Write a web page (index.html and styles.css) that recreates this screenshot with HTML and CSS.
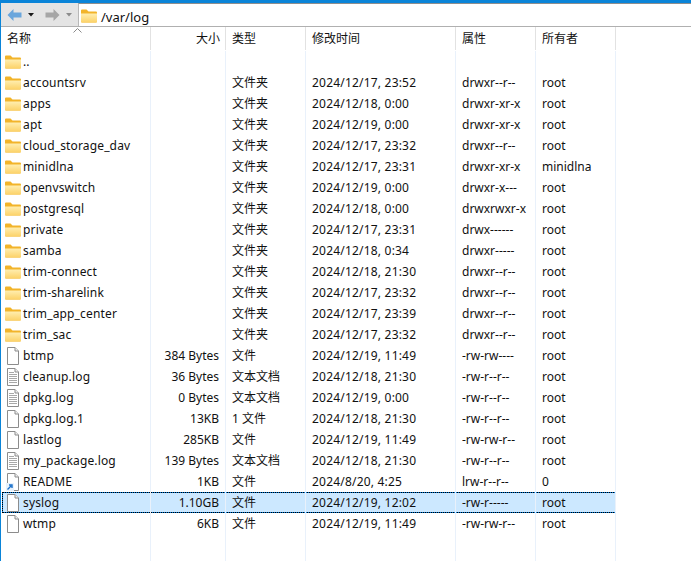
FILE: index.html
```html
<!DOCTYPE html>
<html lang="zh">
<head>
<meta charset="utf-8">
<title>/var/log</title>
<link rel="stylesheet" href="styles.css">
</head>
<body>
<svg class="defs" width="0" height="0">
  <defs>
    <linearGradient id="fg" x1="0" y1="0" x2="0" y2="1"><stop offset="0" stop-color="#ffeeb0"/><stop offset="1" stop-color="#fcd268"/></linearGradient>
    <symbol id="folder" viewBox="0 0 16 16">
      <path d="M0 2.500a1 1 0 0 1 1-1h4.500l2 2H15a1 1 0 0 1 1 1v9a1 1 0 0 1-1 1H1a1 1 0 0 1-1-1z" fill="#f2b42a"/>
      <path d="M0 5.500h16v8a1 1 0 0 1-1 1H1a1 1 0 0 1-1-1z" fill="url(#fg)"/>
    </symbol>
    <symbol id="file" viewBox="0 0 16 18">
      <path d="M2.500 0.500h7.500l3.500 3.500v13.500h-11z" fill="#fff" stroke="#8c8c8c"/>
      <path d="M10 0.500v3.500h3.500" fill="#f0f0f0" stroke="#8c8c8c"/>
    </symbol>
    <symbol id="text" viewBox="0 0 16 18">
      <path d="M2.500 0.500h7.500l3.500 3.500v13.500h-11z" fill="#fff" stroke="#8c8c8c"/>
      <path d="M10 0.500v3.500h3.500" fill="#f0f0f0" stroke="#8c8c8c"/>
      <path d="M4 4.500h5M4 6.500h8M4 8.500h8M4 10.500h8M4 12.500h8M4 14.500h8" stroke="#a8a8a8"/>
    </symbol>
  </defs>
</svg>
<div class="window">
  <div class="toolbar">
    <div class="nav">
      <svg class="arrow" viewBox="0 0 15 12"><path d="M6.500 0L0.500 6l6 6V8.500h8v-5h-8z" fill="#6aa6dc"/></svg>
      <svg class="caret" viewBox="0 0 6 4"><path d="M0 0h6L3 3.500z" fill="#1a1a1a"/></svg>
      <svg class="arrow fwd" viewBox="0 0 15 12"><path d="M8.500 0l6 6-6 6V8.500h-8v-5h8z" fill="#a6a6a6"/></svg>
      <svg class="caret" viewBox="0 0 6 4"><path d="M0 0h6L3 3.500z" fill="#8c8c8c"/></svg>
    </div>
    <div class="path">
      <svg class="path-icon"><use href="#folder"/></svg>
      <span>/var/log</span>
    </div>
  </div>
  <div class="list">
    <svg class="sort" viewBox="0 0 9 5"><path d="M0.500 4.500l4-4 4 4" fill="none" stroke="#8a8a8a"/></svg>
    <div class="row head">
      <div class="cell">名称</div><div class="cell size">大小</div><div class="cell">类型</div><div class="cell">修改时间</div><div class="cell">属性</div><div class="cell">所有者</div>
    </div>
    <div class="rows">
      <div class="row"><div class="cell name"><svg class="ic"><use href="#folder"/></svg>..</div><div class="cell size"></div><div class="cell"></div><div class="cell"></div><div class="cell"></div><div class="cell"></div></div>
      <div class="row"><div class="cell name"><svg class="ic"><use href="#folder"/></svg>accountsrv</div><div class="cell size"></div><div class="cell">文件夹</div><div class="cell">2024/12/17, 23:52</div><div class="cell">drwxr--r--</div><div class="cell">root</div></div>
      <div class="row"><div class="cell name"><svg class="ic"><use href="#folder"/></svg>apps</div><div class="cell size"></div><div class="cell">文件夹</div><div class="cell">2024/12/18, 0:00</div><div class="cell">drwxr-xr-x</div><div class="cell">root</div></div>
      <div class="row"><div class="cell name"><svg class="ic"><use href="#folder"/></svg>apt</div><div class="cell size"></div><div class="cell">文件夹</div><div class="cell">2024/12/19, 0:00</div><div class="cell">drwxr-xr-x</div><div class="cell">root</div></div>
      <div class="row"><div class="cell name"><svg class="ic"><use href="#folder"/></svg>cloud_storage_dav</div><div class="cell size"></div><div class="cell">文件夹</div><div class="cell">2024/12/17, 23:32</div><div class="cell">drwxr--r--</div><div class="cell">root</div></div>
      <div class="row"><div class="cell name"><svg class="ic"><use href="#folder"/></svg>minidlna</div><div class="cell size"></div><div class="cell">文件夹</div><div class="cell">2024/12/17, 23:31</div><div class="cell">drwxr-xr-x</div><div class="cell">minidlna</div></div>
      <div class="row"><div class="cell name"><svg class="ic"><use href="#folder"/></svg>openvswitch</div><div class="cell size"></div><div class="cell">文件夹</div><div class="cell">2024/12/19, 0:00</div><div class="cell">drwxr-x---</div><div class="cell">root</div></div>
      <div class="row"><div class="cell name"><svg class="ic"><use href="#folder"/></svg>postgresql</div><div class="cell size"></div><div class="cell">文件夹</div><div class="cell">2024/12/18, 0:00</div><div class="cell">drwxrwxr-x</div><div class="cell">root</div></div>
      <div class="row"><div class="cell name"><svg class="ic"><use href="#folder"/></svg>private</div><div class="cell size"></div><div class="cell">文件夹</div><div class="cell">2024/12/17, 23:31</div><div class="cell">drwx------</div><div class="cell">root</div></div>
      <div class="row"><div class="cell name"><svg class="ic"><use href="#folder"/></svg>samba</div><div class="cell size"></div><div class="cell">文件夹</div><div class="cell">2024/12/18, 0:34</div><div class="cell">drwxr-----</div><div class="cell">root</div></div>
      <div class="row"><div class="cell name"><svg class="ic"><use href="#folder"/></svg>trim-connect</div><div class="cell size"></div><div class="cell">文件夹</div><div class="cell">2024/12/18, 21:30</div><div class="cell">drwxr--r--</div><div class="cell">root</div></div>
      <div class="row"><div class="cell name"><svg class="ic"><use href="#folder"/></svg>trim-sharelink</div><div class="cell size"></div><div class="cell">文件夹</div><div class="cell">2024/12/17, 23:32</div><div class="cell">drwxr--r--</div><div class="cell">root</div></div>
      <div class="row"><div class="cell name"><svg class="ic"><use href="#folder"/></svg>trim_app_center</div><div class="cell size"></div><div class="cell">文件夹</div><div class="cell">2024/12/17, 23:39</div><div class="cell">drwxr--r--</div><div class="cell">root</div></div>
      <div class="row"><div class="cell name"><svg class="ic"><use href="#folder"/></svg>trim_sac</div><div class="cell size"></div><div class="cell">文件夹</div><div class="cell">2024/12/17, 23:32</div><div class="cell">drwxr--r--</div><div class="cell">root</div></div>
      <div class="row"><div class="cell name"><svg class="ic doc"><use href="#file"/></svg>btmp</div><div class="cell size">384 Bytes</div><div class="cell">文件</div><div class="cell">2024/12/19, 11:49</div><div class="cell">-rw-rw----</div><div class="cell">root</div></div>
      <div class="row"><div class="cell name"><svg class="ic doc"><use href="#text"/></svg>cleanup.log</div><div class="cell size">36 Bytes</div><div class="cell">文本文档</div><div class="cell">2024/12/18, 21:30</div><div class="cell">-rw-r--r--</div><div class="cell">root</div></div>
      <div class="row"><div class="cell name"><svg class="ic doc"><use href="#text"/></svg>dpkg.log</div><div class="cell size">0 Bytes</div><div class="cell">文本文档</div><div class="cell">2024/12/19, 0:00</div><div class="cell">-rw-r--r--</div><div class="cell">root</div></div>
      <div class="row"><div class="cell name"><svg class="ic doc"><use href="#file"/></svg>dpkg.log.1</div><div class="cell size">13KB</div><div class="cell">1 文件</div><div class="cell">2024/12/18, 21:30</div><div class="cell">-rw-r--r--</div><div class="cell">root</div></div>
      <div class="row"><div class="cell name"><svg class="ic doc"><use href="#file"/></svg>lastlog</div><div class="cell size">285KB</div><div class="cell">文件</div><div class="cell">2024/12/19, 11:49</div><div class="cell">-rw-rw-r--</div><div class="cell">root</div></div>
      <div class="row"><div class="cell name"><svg class="ic doc"><use href="#text"/></svg>my_package.log</div><div class="cell size">139 Bytes</div><div class="cell">文本文档</div><div class="cell">2024/12/18, 21:30</div><div class="cell">-rw-r--r--</div><div class="cell">root</div></div>
      <div class="row"><div class="cell name"><span class="ic-wrap"><svg class="ic doc"><use href="#file"/></svg><svg class="link" viewBox="0 0 8 8"><rect width="8" height="8" fill="#e8f2fc"/><path d="M1.500 6.500L5 3M3 2h3v3" fill="none" stroke="#1a6fc9" stroke-width="1.400"/></svg></span>README</div><div class="cell size">1KB</div><div class="cell">文件</div><div class="cell">2024/8/20, 4:25</div><div class="cell">lrw-r--r--</div><div class="cell">0</div></div>
      <div class="row selected"><div class="cell name"><svg class="ic doc"><use href="#file"/></svg>syslog</div><div class="cell size">1.10GB</div><div class="cell">文件</div><div class="cell">2024/12/19, 12:02</div><div class="cell">-rw-r-----</div><div class="cell">root</div></div>
      <div class="row"><div class="cell name"><svg class="ic doc"><use href="#file"/></svg>wtmp</div><div class="cell size">6KB</div><div class="cell">文件</div><div class="cell">2024/12/19, 11:49</div><div class="cell">-rw-rw-r--</div><div class="cell">root</div></div>
    </div>
    <div class="guides">
      <i></i><i></i><i></i><i></i><i></i><i></i>
    </div>
  </div>
</div>
</body>
</html>
```

FILE: styles.css
```css
* { box-sizing: border-box; }
html, body { margin: 0; height: 100%; }
body {
  background: #fff;
  font-family: "Noto Sans", "Noto Sans CJK SC", sans-serif;
  font-size: 12px;
  color: #111;
  overflow: hidden;
}
.defs { position: absolute; }
.window {
  height: 561px;
  border-top: 3px solid #0a84d8;
  border-left: 1px solid #0a84d8;
  display: flex;
  flex-direction: column;
}
.toolbar {
  height: 24px;
  display: flex;
  background: #e4e4e4;
  border-bottom: 1px solid #b0b0b0;
}
.nav {
  width: 77px;
  display: flex;
  align-items: center;
  padding: 1px 0 0 6px;
}
.arrow { width: 15px; height: 12px; }
.fwd { margin-left: 11px; }
.caret { width: 6px; height: 4px; margin-left: 6px; }
.path {
  flex: 1;
  background: #fff;
  border-top: 1px solid #8e8e8e;
  border-left: 1px solid #b8b8b8;
  display: flex;
  align-items: center;
  gap: 4px;
  padding: 2px 0 0 2px;
  font-size: 13px;
}
.path-icon { width: 16px; height: 16px; }
.path span { position: relative; top: 1px; }
.list { position: relative; flex: 1; }
.sort { position: absolute; left: 72px; top: 1px; width: 9px; height: 5px; }
.row {
  display: grid;
  grid-template-columns: 150px 75px 80px 150px 80px 80px;
  width: 615px;
  height: 21px;
  align-items: center;
  white-space: nowrap;
}
.cell { padding-left: 6px; line-height: 21px; }
.cell.size { padding: 0 7px 0 0; text-align: right; }
.cell.name { display: flex; align-items: center; padding-left: 4px; letter-spacing: .15px; }
.row .cell:nth-child(4) { letter-spacing: .2px; }
.head { height: 23px; margin-bottom: 1px; }
.head .cell { height: 23px; line-height: 23px; border-right: 1px solid #e2e2e2; }
.head .cell:nth-child(4) { letter-spacing: 0; }
.head .size { padding-right: 5px; }
.ic { width: 16px; height: 16px; flex: none; margin-right: 2px; }
.ic.doc { height: 18px; }
.ic-wrap { position: relative; display: flex; }
.link { position: absolute; left: 1px; bottom: 0; width: 8px; height: 8px; }
.selected {
  position: relative;
  background: #cce8ff;
  margin-left: 1px;
  width: 614px;
  grid-template-columns: 149px 75px 80px 150px 80px 80px;
  box-shadow: inset 0 0 0 1px #0078d7;
}
.selected::after {
  content: "";
  position: absolute;
  inset: 0;
  border: 1px dotted #000;
}
.selected .name { padding-left: 3px; }
.guides {
  position: absolute;
  inset: 24px 0 0 0;
  display: grid;
  grid-template-columns: 150px 75px 80px 150px 80px 80px;
  width: 615px;
  pointer-events: none;
}
.guides i { border-right: 1px solid #e9f1fb; }
```
